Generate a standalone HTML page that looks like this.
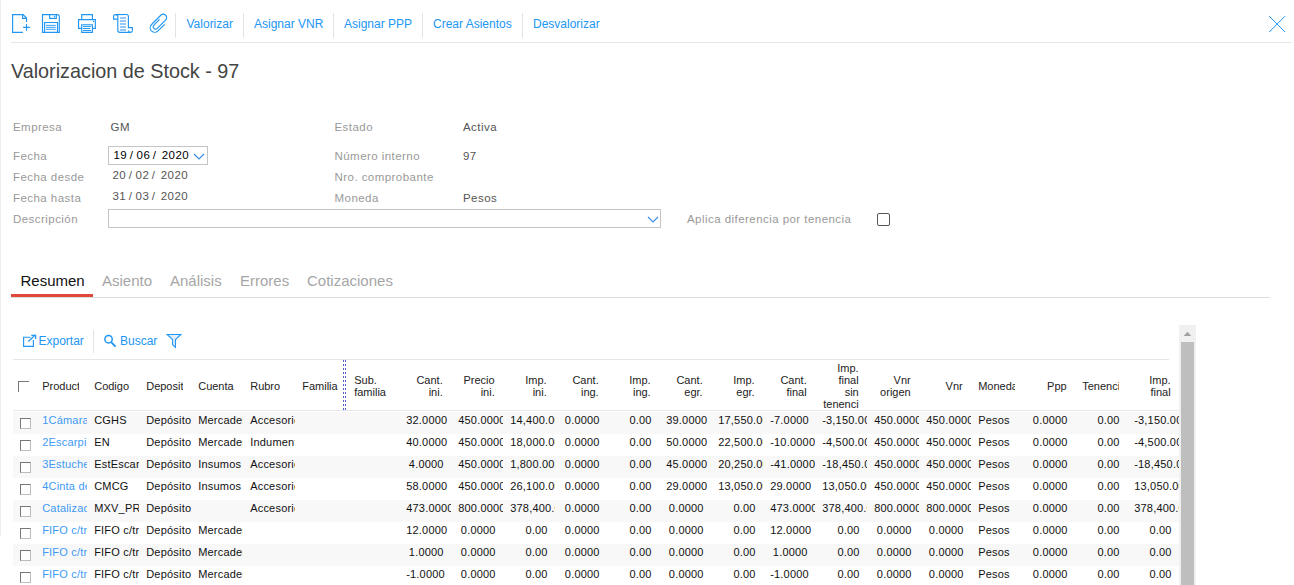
<!DOCTYPE html><html><head><meta charset='utf-8'><style>
*{margin:0;padding:0;box-sizing:border-box}
html,body{width:1294px;height:585px;overflow:hidden;background:#fff}
body{position:relative;font-family:"Liberation Sans",sans-serif;}
.a{position:absolute;white-space:nowrap}
.tb{color:#2196f3;font-size:12px;line-height:14px}
.sep{position:absolute;width:1px;background:#e3e3e3}
.lbl{color:#999;font-size:11.5px;letter-spacing:0.45px;line-height:14px}
.val{color:#555;font-size:11.5px;letter-spacing:0.45px;line-height:14px}
.tab{font-size:15px;line-height:17px;color:#a6a6a6}
.grid{position:absolute;left:13px;top:360px;width:1167px;height:225px;overflow:hidden}
.hc{position:absolute;top:1px;height:50px;font-size:11px;line-height:12px;color:#222;display:flex;align-items:center;overflow:hidden;white-space:nowrap}
.row{position:absolute;left:0;width:1167px;height:22px}
.c{position:absolute;top:0;height:22px;width:48.3px;padding:0 7.3px 0 3.5px;font-size:11px;line-height:17px;color:#111;white-space:nowrap;overflow:hidden;letter-spacing:0.2px}
.cb{position:absolute;width:11px;height:11px;border:1px solid #777;border-right-color:#bdbdbd;border-bottom-color:#bdbdbd;background:#fff}
</style></head><body>
<div class="a" style="left:0;top:0;width:1px;height:536px;background:#eeeeee"></div>
<svg class="a" style="left:0;top:0" width="1294" height="45" viewBox="0 0 1294 45">
<g fill="none" stroke="#2196f3" stroke-width="1.15" stroke-linejoin="miter">
<path d="M22.9 32.4H12.6V14.55H23.1L26.5 18V21.9"/>
<path d="M22.6 14.55V18.3H26.9"/>
<path d="M23.1 27.4H29.9M26.5 24.1V30.8"/>
<path d="M42.5 14.55H57.9L59.3 15.9V32.4H42.5Z"/>
<path d="M49.6 14.55V18.4H56.3V14.55"/>
<path d="M44.6 32.4V22.5H57.5V32.4"/>
</g>
<g stroke="#2196f3" stroke-width="0.9"><path d="M46 25.4H55.8M46 27.35H55.8M46 29.3H55.8"/></g>
<circle cx="54.4" cy="16.5" r="0.65" fill="#2196f3"/>
<g fill="none" stroke="#2196f3" stroke-width="1.15">
<path d="M81.7 19.55V14.55H92.4V19.55"/>
<path d="M81.7 28.3H78.55V19.55H95.35V28.3H92.4"/>
<path d="M81.7 24.7H92.4V32.3H81.7Z"/>
</g>
<g stroke="#2196f3" stroke-width="1" stroke-linecap="round"><path d="M83.4 26.4H90.6M83.4 28.5H89.8M83.4 30.5H90.6"/></g>
<circle cx="93.5" cy="21.5" r="0.7" fill="#2196f3"/>
<g fill="none" stroke="#2196f3" stroke-width="1.15">
<path d="M117.8 16.3V30.3C117.8 31.5 118.6 32.3 119.8 32.3H130.6C131.6 32.3 132.4 31.5 132.4 30.5V27.55H128.4V16.6C128.4 15.4 127.6 14.55 126.4 14.55H115.4C114.3 14.55 113.6 15.3 113.6 16.4V19.1H117.8"/>
<path d="M128.4 30.5C128.4 31.5 129.2 32.3 130.2 32.3"/>
<path d="M115.6 14.55C116.9 14.55 117.8 15.3 117.8 16.5"/>
</g>
<g fill="#86c0f7"><rect x="120" y="17.15" width="6" height="1.7"/><rect x="120" y="20.15" width="6" height="1.7"/><rect x="120" y="23.15" width="6" height="1.7"/><rect x="120" y="26.15" width="6" height="1.7"/><rect x="120" y="29.15" width="6" height="1.7"/></g>
<g fill="none" stroke="#2196f3" stroke-width="1.15" transform="translate(154.79,27.72) rotate(-45)">
<path d="M9.35 -2.55H1.25A2.4 2.4 0 0 0 1.25 2.25H13.05A3.4 3.4 0 0 0 13.05 -4.55H0A4.55 4.55 0 0 0 0 4.55H9.35"/>
</g>
<g fill="none" stroke="#2196f3" stroke-width="1">
<path d="M1269.2 16.2L1285 32M1285 16.2L1269.2 32"/>
</g>
</svg>
<div class="sep" style="left:175px;top:13px;height:25px"></div>
<div class="a tb" style="left:186.5px;top:17px">Valorizar</div>
<div class="sep" style="left:242.5px;top:13px;height:25px"></div>
<div class="a tb" style="left:254px;top:17px">Asignar VNR</div>
<div class="sep" style="left:333px;top:13px;height:25px"></div>
<div class="a tb" style="left:344px;top:17px">Asignar PPP</div>
<div class="sep" style="left:422px;top:13px;height:25px"></div>
<div class="a tb" style="left:433px;top:17px">Crear Asientos</div>
<div class="sep" style="left:522px;top:13px;height:25px"></div>
<div class="a tb" style="left:533px;top:17px">Desvalorizar</div>
<div class="a" style="left:11px;top:42px;width:1281px;height:1px;background:#e6e6e6"></div>
<div class="a" style="left:11px;top:60px;font-size:19.8px;line-height:23px;color:#444">Valorizacion de Stock - 97</div>
<div class="a lbl" style="left:13px;top:120px">Empresa</div>
<div class="a val" style="left:110.5px;top:120px">GM</div>
<div class="a lbl" style="left:13px;top:148.5px">Fecha</div>
<div class="a lbl" style="left:13px;top:169.5px">Fecha desde</div>
<div class="a lbl" style="left:13px;top:191px">Fecha hasta</div>
<div class="a lbl" style="left:13px;top:211.5px">Descripción</div>
<div class="a lbl" style="left:334.5px;top:120px">Estado</div>
<div class="a val" style="left:463px;top:120px">Activa</div>
<div class="a lbl" style="left:334.5px;top:148.5px">Número interno</div>
<div class="a val" style="left:463px;top:148.5px">97</div>
<div class="a lbl" style="left:334.5px;top:169.5px">Nro. comprobante</div>
<div class="a lbl" style="left:334.5px;top:191px">Moneda</div>
<div class="a val" style="left:463px;top:191px">Pesos</div>
<div class="a lbl" style="left:687px;top:211.5px">Aplica diferencia por tenencia</div>
<div class="a" style="left:108px;top:146px;width:100px;height:19px;border:1px solid #c4c4c4"></div>
<div class="a val" style="left:113.5px;top:148px;color:#000">19<span style="margin:0 3.2px 0 2.5px">/</span>06<span style="margin:0 5.3px 0 2.5px">/</span>2020</div>
<div class="a val" style="left:112.5px;top:167.5px;color:#555">20<span style="margin:0 3.2px 0 2.5px">/</span>02<span style="margin:0 5.3px 0 2.5px">/</span>2020</div>
<div class="a val" style="left:112.5px;top:188.5px;color:#555">31<span style="margin:0 3.2px 0 2.5px">/</span>03<span style="margin:0 5.3px 0 2.5px">/</span>2020</div>
<svg class="a" style="left:193px;top:153px" width="12" height="7" viewBox="0 0 12 7"><path d="M1 1L6 6L11 1" fill="none" stroke="#3a8ee6" stroke-width="1.2"/></svg>
<div class="a" style="left:108px;top:209px;width:553px;height:19px;border:1px solid #c4c4c4"></div>
<svg class="a" style="left:647px;top:216px" width="12" height="7" viewBox="0 0 12 7"><path d="M1 1L6 6L11 1" fill="none" stroke="#3a8ee6" stroke-width="1.2"/></svg>
<div class="a" style="left:877px;top:213px;width:13px;height:13px;border:1px solid #555;border-radius:2px"></div>
<div class="a tab" style="left:20.5px;top:272px;color:#111">Resumen</div>
<div class="a tab" style="left:102px;top:272px">Asiento</div>
<div class="a tab" style="left:170px;top:272px">Análisis</div>
<div class="a tab" style="left:240px;top:272px">Errores</div>
<div class="a tab" style="left:307px;top:272px">Cotizaciones</div>
<div class="a" style="left:11px;top:297px;width:1259px;height:1px;background:#dedede"></div>
<div class="a" style="left:11px;top:294px;width:82px;height:3px;background:#e0483a"></div>
<svg class="a" style="left:0;top:320px" width="200" height="40" viewBox="0 320 200 40">
<g fill="none" stroke="#2196f3" stroke-width="1.15">
<path d="M30.6 337.2H23.6V346.3H33.4V339.9"/>
<path d="M28.4 341.5L35.3 334.9" stroke-width="1.3"/>
<path d="M31.3 335.4H35.6V338.9" stroke-width="1.3"/>
<circle cx="108.55" cy="339.2" r="3.7" stroke-width="1.5"/>
<path d="M111.6 342.6L115 346" stroke-width="1.8" stroke-linecap="round"/>
<path d="M167.1 334.4H180.9L175.45 339.5V347.4L172.6 344.7V339.5Z" fill="#e2edf9" stroke-width="1.05"/>
</g></svg>
<div class="a tb" style="left:38.5px;top:334px">Exportar</div>
<div class="sep" style="left:93px;top:330px;height:23px"></div>
<div class="a tb" style="left:120px;top:334px">Buscar</div>
<div class="a" style="left:13px;top:359px;width:1156px;height:1px;background:#e6e6e6"></div>
<div class="grid">
<div class="hc" style="left:29.2px;width:36.5px"><div style="width:36.5px;text-align:left">Product</div></div>
<div class="hc" style="left:81.2px;width:36.5px"><div style="width:36.5px;text-align:left">Codigo</div></div>
<div class="hc" style="left:133.2px;width:36.5px"><div style="width:36.5px;text-align:left">Deposit</div></div>
<div class="hc" style="left:185.2px;width:36.5px"><div style="width:36.5px;text-align:left">Cuenta</div></div>
<div class="hc" style="left:237.2px;width:36.5px"><div style="width:36.5px;text-align:left">Rubro</div></div>
<div class="hc" style="left:289.2px;width:36.5px"><div style="width:36.5px;text-align:left">Familia</div></div>
<div class="hc" style="left:341.2px;width:36.5px"><div style="width:36.5px;text-align:left">Sub.<br>familia</div></div>
<div class="hc" style="left:393.2px;width:36.5px"><div style="width:36.5px;text-align:right">Cant.<br>ini.</div></div>
<div class="hc" style="left:445.2px;width:36.5px"><div style="width:36.5px;text-align:right">Precio<br>ini.</div></div>
<div class="hc" style="left:497.2px;width:36.5px"><div style="width:36.5px;text-align:right">Imp.<br>ini.</div></div>
<div class="hc" style="left:549.2px;width:36.5px"><div style="width:36.5px;text-align:right">Cant.<br>ing.</div></div>
<div class="hc" style="left:601.2px;width:36.5px"><div style="width:36.5px;text-align:right">Imp.<br>ing.</div></div>
<div class="hc" style="left:653.2px;width:36.5px"><div style="width:36.5px;text-align:right">Cant.<br>egr.</div></div>
<div class="hc" style="left:705.2px;width:36.5px"><div style="width:36.5px;text-align:right">Imp.<br>egr.</div></div>
<div class="hc" style="left:757.2px;width:36.5px"><div style="width:36.5px;text-align:right">Cant.<br>final</div></div>
<div class="hc" style="left:809.2px;width:36.5px"><div style="width:36.5px;text-align:right">Imp.<br>final<br>sin<br>tenenci</div></div>
<div class="hc" style="left:861.2px;width:36.5px"><div style="width:36.5px;text-align:right">Vnr<br>origen</div></div>
<div class="hc" style="left:913.2px;width:36.5px"><div style="width:36.5px;text-align:right">Vnr</div></div>
<div class="hc" style="left:965.2px;width:36.5px"><div style="width:36.5px;text-align:left">Moneda</div></div>
<div class="hc" style="left:1017.2px;width:36.5px"><div style="width:36.5px;text-align:right">Ppp</div></div>
<div class="hc" style="left:1069.2px;width:36.5px"><div style="width:36.5px;text-align:left">Tenenci</div></div>
<div class="hc" style="left:1121.2px;width:36.5px"><div style="width:36.5px;text-align:right">Imp.<br>final</div></div>
<div class="a" style="left:5px;top:21px;width:11px;height:11px;border-top:1px solid #777;border-left:1px solid #777"></div>
<div class="a" style="left:0;top:50px;width:1167px;height:1px;background:#e8e8e8"></div>
<div class="a" style="left:330px;top:0;width:1px;height:50px;background:repeating-linear-gradient(#5560d0 0 2px,transparent 2px 4px)"></div><div class="a" style="left:332px;top:0;width:1px;height:50px;background:repeating-linear-gradient(#5560d0 0 2px,transparent 2px 4px)"></div>
<div class="row" style="top:52px;background:#f8f8f8">
<div class="cb" style="left:7px;top:6px"></div>
<div class="c" style="left:25.7px;color:#3d9af5">1Cámara de fotos</div>
<div class="c" style="left:77.7px">CGHS</div>
<div class="c" style="left:129.7px">Depósito central</div>
<div class="c" style="left:181.7px">Mercaderías</div>
<div class="c" style="left:233.7px">Accesorios</div>
<div class="c" style="left:389.7px;text-align:right">32.0000</div>
<div class="c" style="left:441.7px;text-align:right">450.0000</div>
<div class="c" style="left:493.7px;text-align:right">14,400.00</div>
<div class="c" style="left:545.7px;text-align:right">0.0000</div>
<div class="c" style="left:597.7px;text-align:right">0.00</div>
<div class="c" style="left:649.7px;text-align:right">39.0000</div>
<div class="c" style="left:701.7px;text-align:right">17,550.00</div>
<div class="c" style="left:753.7px;text-align:right">-7.0000</div>
<div class="c" style="left:805.7px;text-align:right">-3,150.00</div>
<div class="c" style="left:857.7px;text-align:right">450.0000</div>
<div class="c" style="left:909.7px;text-align:right">450.0000</div>
<div class="c" style="left:961.7px">Pesos</div>
<div class="c" style="left:1013.7px;text-align:right">0.0000</div>
<div class="c" style="left:1065.7px;text-align:right">0.00</div>
<div class="c" style="left:1117.7px;text-align:right">-3,150.00</div>
</div>
<div class="row" style="top:74px;background:#fff">
<div class="cb" style="left:7px;top:6px"></div>
<div class="c" style="left:25.7px;color:#3d9af5">2Escarpines</div>
<div class="c" style="left:77.7px">EN</div>
<div class="c" style="left:129.7px">Depósito central</div>
<div class="c" style="left:181.7px">Mercaderías</div>
<div class="c" style="left:233.7px">Indumentaria</div>
<div class="c" style="left:389.7px;text-align:right">40.0000</div>
<div class="c" style="left:441.7px;text-align:right">450.0000</div>
<div class="c" style="left:493.7px;text-align:right">18,000.00</div>
<div class="c" style="left:545.7px;text-align:right">0.0000</div>
<div class="c" style="left:597.7px;text-align:right">0.00</div>
<div class="c" style="left:649.7px;text-align:right">50.0000</div>
<div class="c" style="left:701.7px;text-align:right">22,500.00</div>
<div class="c" style="left:753.7px;text-align:right">-10.0000</div>
<div class="c" style="left:805.7px;text-align:right">-4,500.00</div>
<div class="c" style="left:857.7px;text-align:right">450.0000</div>
<div class="c" style="left:909.7px;text-align:right">450.0000</div>
<div class="c" style="left:961.7px">Pesos</div>
<div class="c" style="left:1013.7px;text-align:right">0.0000</div>
<div class="c" style="left:1065.7px;text-align:right">0.00</div>
<div class="c" style="left:1117.7px;text-align:right">-4,500.00</div>
</div>
<div class="row" style="top:96px;background:#f8f8f8">
<div class="cb" style="left:7px;top:6px"></div>
<div class="c" style="left:25.7px;color:#3d9af5">3Estuche</div>
<div class="c" style="left:77.7px">EstEscarpines</div>
<div class="c" style="left:129.7px">Depósito central</div>
<div class="c" style="left:181.7px">Insumos</div>
<div class="c" style="left:233.7px">Accesorios</div>
<div class="c" style="left:389.7px;text-align:right">4.0000</div>
<div class="c" style="left:441.7px;text-align:right">450.0000</div>
<div class="c" style="left:493.7px;text-align:right">1,800.00</div>
<div class="c" style="left:545.7px;text-align:right">0.0000</div>
<div class="c" style="left:597.7px;text-align:right">0.00</div>
<div class="c" style="left:649.7px;text-align:right">45.0000</div>
<div class="c" style="left:701.7px;text-align:right">20,250.00</div>
<div class="c" style="left:753.7px;text-align:right">-41.0000</div>
<div class="c" style="left:805.7px;text-align:right">-18,450.00</div>
<div class="c" style="left:857.7px;text-align:right">450.0000</div>
<div class="c" style="left:909.7px;text-align:right">450.0000</div>
<div class="c" style="left:961.7px">Pesos</div>
<div class="c" style="left:1013.7px;text-align:right">0.0000</div>
<div class="c" style="left:1065.7px;text-align:right">0.00</div>
<div class="c" style="left:1117.7px;text-align:right">-18,450.00</div>
</div>
<div class="row" style="top:118px;background:#fff">
<div class="cb" style="left:7px;top:6px"></div>
<div class="c" style="left:25.7px;color:#3d9af5">4Cinta de</div>
<div class="c" style="left:77.7px">CMCG</div>
<div class="c" style="left:129.7px">Depósito central</div>
<div class="c" style="left:181.7px">Insumos</div>
<div class="c" style="left:233.7px">Accesorios</div>
<div class="c" style="left:389.7px;text-align:right">58.0000</div>
<div class="c" style="left:441.7px;text-align:right">450.0000</div>
<div class="c" style="left:493.7px;text-align:right">26,100.00</div>
<div class="c" style="left:545.7px;text-align:right">0.0000</div>
<div class="c" style="left:597.7px;text-align:right">0.00</div>
<div class="c" style="left:649.7px;text-align:right">29.0000</div>
<div class="c" style="left:701.7px;text-align:right">13,050.00</div>
<div class="c" style="left:753.7px;text-align:right">29.0000</div>
<div class="c" style="left:805.7px;text-align:right">13,050.00</div>
<div class="c" style="left:857.7px;text-align:right">450.0000</div>
<div class="c" style="left:909.7px;text-align:right">450.0000</div>
<div class="c" style="left:961.7px">Pesos</div>
<div class="c" style="left:1013.7px;text-align:right">0.0000</div>
<div class="c" style="left:1065.7px;text-align:right">0.00</div>
<div class="c" style="left:1117.7px;text-align:right">13,050.00</div>
</div>
<div class="row" style="top:140px;background:#f8f8f8">
<div class="cb" style="left:7px;top:6px"></div>
<div class="c" style="left:25.7px;color:#3d9af5">Catalizador</div>
<div class="c" style="left:77.7px">MXV_PRO</div>
<div class="c" style="left:129.7px">Depósito central</div>
<div class="c" style="left:233.7px">Accesorios</div>
<div class="c" style="left:389.7px;text-align:right">473.0000</div>
<div class="c" style="left:441.7px;text-align:right">800.0000</div>
<div class="c" style="left:493.7px;text-align:right">378,400.00</div>
<div class="c" style="left:545.7px;text-align:right">0.0000</div>
<div class="c" style="left:597.7px;text-align:right">0.00</div>
<div class="c" style="left:649.7px;text-align:right">0.0000</div>
<div class="c" style="left:701.7px;text-align:right">0.00</div>
<div class="c" style="left:753.7px;text-align:right">473.0000</div>
<div class="c" style="left:805.7px;text-align:right">378,400.00</div>
<div class="c" style="left:857.7px;text-align:right">800.0000</div>
<div class="c" style="left:909.7px;text-align:right">800.0000</div>
<div class="c" style="left:961.7px">Pesos</div>
<div class="c" style="left:1013.7px;text-align:right">0.0000</div>
<div class="c" style="left:1065.7px;text-align:right">0.00</div>
<div class="c" style="left:1117.7px;text-align:right">378,400.00</div>
</div>
<div class="row" style="top:162px;background:#fff">
<div class="cb" style="left:7px;top:6px"></div>
<div class="c" style="left:25.7px;color:#3d9af5">FIFO c/tr</div>
<div class="c" style="left:77.7px">FIFO c/tr</div>
<div class="c" style="left:129.7px">Depósito central</div>
<div class="c" style="left:181.7px">Mercaderías</div>
<div class="c" style="left:389.7px;text-align:right">12.0000</div>
<div class="c" style="left:441.7px;text-align:right">0.0000</div>
<div class="c" style="left:493.7px;text-align:right">0.00</div>
<div class="c" style="left:545.7px;text-align:right">0.0000</div>
<div class="c" style="left:597.7px;text-align:right">0.00</div>
<div class="c" style="left:649.7px;text-align:right">0.0000</div>
<div class="c" style="left:701.7px;text-align:right">0.00</div>
<div class="c" style="left:753.7px;text-align:right">12.0000</div>
<div class="c" style="left:805.7px;text-align:right">0.00</div>
<div class="c" style="left:857.7px;text-align:right">0.0000</div>
<div class="c" style="left:909.7px;text-align:right">0.0000</div>
<div class="c" style="left:961.7px">Pesos</div>
<div class="c" style="left:1013.7px;text-align:right">0.0000</div>
<div class="c" style="left:1065.7px;text-align:right">0.00</div>
<div class="c" style="left:1117.7px;text-align:right">0.00</div>
</div>
<div class="row" style="top:184px;background:#f8f8f8">
<div class="cb" style="left:7px;top:6px"></div>
<div class="c" style="left:25.7px;color:#3d9af5">FIFO c/tr</div>
<div class="c" style="left:77.7px">FIFO c/tr</div>
<div class="c" style="left:129.7px">Depósito central</div>
<div class="c" style="left:181.7px">Mercaderías</div>
<div class="c" style="left:389.7px;text-align:right">1.0000</div>
<div class="c" style="left:441.7px;text-align:right">0.0000</div>
<div class="c" style="left:493.7px;text-align:right">0.00</div>
<div class="c" style="left:545.7px;text-align:right">0.0000</div>
<div class="c" style="left:597.7px;text-align:right">0.00</div>
<div class="c" style="left:649.7px;text-align:right">0.0000</div>
<div class="c" style="left:701.7px;text-align:right">0.00</div>
<div class="c" style="left:753.7px;text-align:right">1.0000</div>
<div class="c" style="left:805.7px;text-align:right">0.00</div>
<div class="c" style="left:857.7px;text-align:right">0.0000</div>
<div class="c" style="left:909.7px;text-align:right">0.0000</div>
<div class="c" style="left:961.7px">Pesos</div>
<div class="c" style="left:1013.7px;text-align:right">0.0000</div>
<div class="c" style="left:1065.7px;text-align:right">0.00</div>
<div class="c" style="left:1117.7px;text-align:right">0.00</div>
</div>
<div class="row" style="top:206px;background:#fff">
<div class="cb" style="left:7px;top:6px"></div>
<div class="c" style="left:25.7px;color:#3d9af5">FIFO c/tr</div>
<div class="c" style="left:77.7px">FIFO c/tr</div>
<div class="c" style="left:129.7px">Depósito central</div>
<div class="c" style="left:181.7px">Mercaderías</div>
<div class="c" style="left:389.7px;text-align:right">-1.0000</div>
<div class="c" style="left:441.7px;text-align:right">0.0000</div>
<div class="c" style="left:493.7px;text-align:right">0.00</div>
<div class="c" style="left:545.7px;text-align:right">0.0000</div>
<div class="c" style="left:597.7px;text-align:right">0.00</div>
<div class="c" style="left:649.7px;text-align:right">0.0000</div>
<div class="c" style="left:701.7px;text-align:right">0.00</div>
<div class="c" style="left:753.7px;text-align:right">-1.0000</div>
<div class="c" style="left:805.7px;text-align:right">0.00</div>
<div class="c" style="left:857.7px;text-align:right">0.0000</div>
<div class="c" style="left:909.7px;text-align:right">0.0000</div>
<div class="c" style="left:961.7px">Pesos</div>
<div class="c" style="left:1013.7px;text-align:right">0.0000</div>
<div class="c" style="left:1065.7px;text-align:right">0.00</div>
<div class="c" style="left:1117.7px;text-align:right">0.00</div>
</div>
</div>
<div class="a" style="left:1179px;top:325px;width:17px;height:260px;background:#f0f0f0"></div>
<div class="a" style="left:1181px;top:342px;width:13px;height:243px;background:#bebebe"></div>
<svg class="a" style="left:1179px;top:325px" width="17" height="17" viewBox="1179 325 17 17"><path d="M1183.7 336L1187.45 331.8L1191.2 336Z" fill="#a0a0a0"/></svg>
</body></html>
